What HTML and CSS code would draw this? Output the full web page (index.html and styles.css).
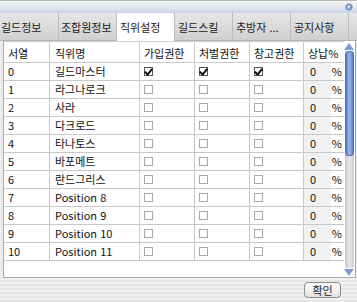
FILE: index.html
```html
<!DOCTYPE html>
<html lang="ko">
<head>
    <meta charset="UTF-8">
    <title>길드 - 직위설정</title>
    <link rel="stylesheet" href="styles.css">
</head>
<body>
    <div class="window">
        <div class="titlebar">
            <span class="close-btn">
                <svg width="8" height="8" viewBox="0 0 8 8">
                    <circle cx="4" cy="4" r="3.6" fill="#6f8fc4"/>
                    <path d="M2.6 2.6 L5.4 5.4 M5.4 2.6 L2.6 5.4" stroke="#fff" stroke-width="1.1"/>
                </svg>
            </span>
        </div>

        <div class="tabs">
            <div class="tab tab-first">길드정보</div>
            <div class="tab tab-wide">조합원정보</div>
            <div class="tab active">직위설정</div>
            <div class="tab">길드스킬</div>
            <div class="tab">추방자 ...</div>
            <div class="tab">공지사항</div>
        </div>

        <div class="panel">
            <div class="grid">
                <div class="row header">
                    <div class="cell">서열</div>
                    <div class="cell name">직위명</div>
                    <div class="cell">가입권한</div>
                    <div class="cell">처벌권한</div>
                    <div class="cell">창고권한</div>
                    <div class="cell">상납%</div>
                </div>
                <div id="rows"></div>
            </div>

            <div class="scrollbar">
                <div class="arrow up"></div>
                <div class="track">
                    <div class="thumb"></div>
                </div>
                <div class="arrow down"></div>
            </div>
        </div>

        <div class="footer">
            <button class="btn">확인</button>
        </div>
    </div>

    <script>
        const positions = ['길드마스터', '라그나로크', '사라', '다크로드', '타나토스', '바포메트', '란드그리스',
            'Position 8', 'Position 9', 'Position 10', 'Position 11'];
        const rows = document.getElementById('rows');

        function checkbox(checked) {
            return `<span class="check${checked ? ' checked' : ''}"></span>`;
        }

        positions.forEach((name, i) => {
            const master = i === 0;
            rows.innerHTML += `
                <div class="row">
                    <div class="cell">${i}</div>
                    <div class="cell name">${name}</div>
                    <div class="cell">${checkbox(master)}</div>
                    <div class="cell">${checkbox(master)}</div>
                    <div class="cell">${checkbox(master)}</div>
                    <div class="cell tax"><span class="tax-value">0</span><span>%</span></div>
                </div>`;
        });
    </script>
</body>
</html>
```

FILE: styles.css
```css
* {
    margin: 0;
    padding: 0;
    box-sizing: border-box;
}

body {
    font-family: "Noto Sans CJK KR", "Liberation Sans", sans-serif;
    font-size: 11px;
    color: #111;
    background: #e8e8e8;
}

.window {
    width: 357px;
    height: 302px;
    display: flex;
    flex-direction: column;
    background: #ececec;
}

.titlebar {
    height: 13px;
    border-top: 1px solid #b8b8b8;
    background: linear-gradient(#f6f6f6, #e4e8ef 50%, #c9d2e2);
    display: flex;
    justify-content: flex-end;
    align-items: center;
    padding-right: 4px;
}

.close-btn {
    display: flex;
}

.tabs {
    height: 28px;
    display: flex;
    background: linear-gradient(#e6e6e6, #cfcfcf);
    border-bottom: 1px solid #b4b4b4;
}

.tab {
    width: 58px;
    padding: 6px 0 0 3px;
    font-size: 11px;
    color: #222;
    border-right: 1px solid #bdbdbd;
    white-space: nowrap;
    overflow: hidden;
}

.tab-first {
    width: 59px;
    padding-left: 1px;
}

.tab-wide {
    width: 58px;
    padding-left: 2px;
}

.tab.active {
    background: #fff;
    height: 28px;
    margin-bottom: -1px;
}

.panel {
    height: 237px;
    margin: 0 1px 0 3px;
    border: 1px solid #a8a8a8;
    border-top: none;
    background: #fff;
    display: flex;
}

.grid {
    width: 340px;
}

.row {
    display: grid;
    grid-template-columns: 46px 90px 55px 55px 54px 40px;
    height: 18px;
    border-bottom: 1px solid #c8c8c8;
}

.row.header {
    height: 22px;
    border-top: 1px solid #d0d0d0;
}

.cell {
    border-right: 1px solid #c8c8c8;
    padding-left: 4px;
    display: flex;
    align-items: center;
    white-space: nowrap;
    line-height: 1;
}

.cell:last-child {
    border-right: none;
}

.cell.name {
    padding-left: 5px;
}

.header .cell {
    padding-top: 2px;
}

.check {
    width: 9px;
    height: 9px;
    border: 1px solid #a8a8a8;
    background: #fff;
    position: relative;
}

.check.checked {
    border-color: #555;
}

.check.checked::after {
    content: '';
    position: absolute;
    left: 1px;
    top: -1px;
    width: 3px;
    height: 6px;
    border: solid #111;
    border-width: 0 2px 2px 0;
    transform: rotate(40deg);
}

.tax {
    padding-left: 0;
    justify-content: space-between;
}

.tax-value {
    background: #f1f1f1;
    width: 27px;
    height: 100%;
    display: flex;
    align-items: center;
    padding-left: 6px;
}

.tax span:last-child {
    padding-right: 2px;
}

.scrollbar {
    width: 11px;
    display: flex;
    flex-direction: column;
    background: #fff;
    padding-top: 1px;
}

.arrow {
    height: 9px;
    width: 11px;
    position: relative;
}

.arrow::after {
    content: '';
    position: absolute;
    left: 0;
    border-left: 5.5px solid transparent;
    border-right: 5.5px solid transparent;
}

.arrow.up::after {
    top: 1px;
    border-bottom: 7px solid #7e9bd0;
}

.arrow.down::after {
    bottom: 1px;
    border-top: 7px solid #7e9bd0;
}

.track {
    flex: 1;
    margin: 0 1px;
    background: linear-gradient(90deg, #c8c8c8, #e6e6e6 50%, #cfcfcf);
    border-radius: 2px;
}

.thumb {
    height: 105px;
    border-radius: 3px;
    background: linear-gradient(90deg, #4f78c7, #9db8ea 45%, #5a80c8);
    border: 1px solid #5570a8;
}

.footer {
    flex: 1;
    display: flex;
    justify-content: flex-end;
    align-items: center;
    padding-right: 16px;
    background: repeating-linear-gradient(#f1f1f1 0, #f1f1f1 2px, #e6e6e6 2px, #e6e6e6 4px);
}

.btn {
    width: 37px;
    height: 16px;
    font-family: inherit;
    font-size: 11px;
    color: #222;
    border: 1px solid #8a8a8a;
    border-radius: 4px;
    background: linear-gradient(#ffffff, #e2e2e2);
    line-height: 1;
}
```
